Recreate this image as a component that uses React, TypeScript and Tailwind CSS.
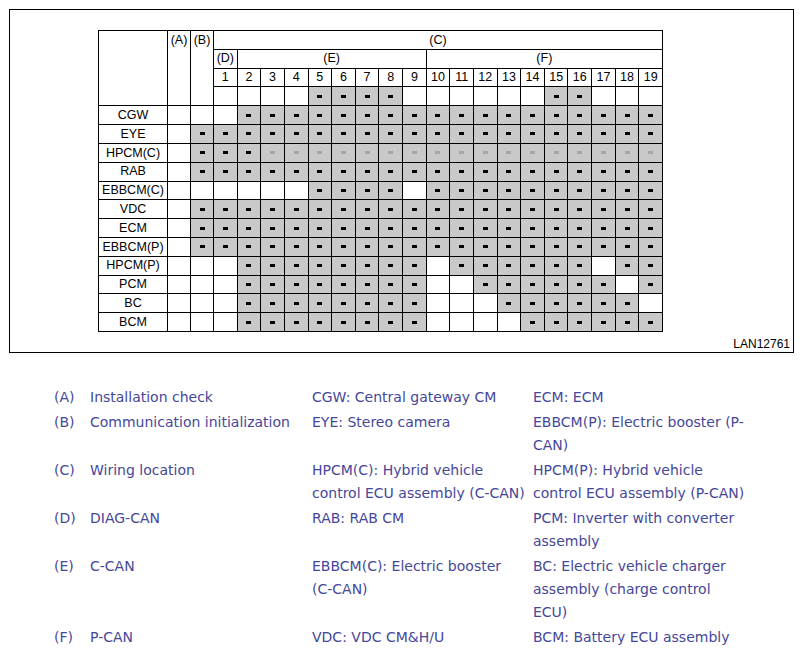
import React from 'react';

// B column + columns 1..19 : '.' empty, 'x' shaded with dash, 'l' shaded with faint dash
const rows: { name: string; cells: string }[] = [
  { name: 'CGW', cells: '..xxxxxxxxxxxxxxxxxx' },
  { name: 'EYE', cells: 'xxxxxxxxxxxxxxxxxxxx' },
  { name: 'HPCM(C)', cells: 'xxxlllllllllllllllll' },
  { name: 'RAB', cells: 'xxxxxxxxxxxxxxxxxxxx' },
  { name: 'EBBCM(C)', cells: '.....xxxx.xxxxxxxxxx' },
  { name: 'VDC', cells: 'xxxxxxxxxxxxxxxxxxxx' },
  { name: 'ECM', cells: 'xxxxxxxxxxxxxxxxxxxx' },
  { name: 'EBBCM(P)', cells: 'xxxxxxxxxxxxxxxxxxxx' },
  { name: 'HPCM(P)', cells: '..xxxxxxxx.xxxxxx.xx' },
  { name: 'PCM', cells: '..xxxxxxxx..xxxxxx.x' },
  { name: 'BC', cells: '..xxxxxxxx...xxxxxx.' },
  { name: 'BCM', cells: '..xxxxxxxx....xxxxxx' },
];

const topRow = '....xxxx......xx...';

const legend: [string, string, string, string][] = [
  ['(A)', 'Installation check', 'CGW: Central gateway CM', 'ECM: ECM'],
  ['(B)', 'Communication initialization', 'EYE: Stereo camera', 'EBBCM(P): Electric booster (P-CAN)'],
  ['(C)', 'Wiring location', 'HPCM(C): Hybrid vehicle control ECU assembly (C-CAN)', 'HPCM(P): Hybrid vehicle control ECU assembly (P-CAN)'],
  ['(D)', 'DIAG-CAN', 'RAB: RAB CM', 'PCM: Inverter with converter assembly'],
  ['(E)', 'C-CAN', 'EBBCM(C): Electric booster (C-CAN)', 'BC: Electric vehicle charger assembly (charge control ECU)'],
  ['(F)', 'P-CAN', 'VDC: VDC CM&H/U', 'BCM: Battery ECU assembly'],
];

const Cell = ({ kind }: { kind: string }) => {
  if (kind === '.') return <div className="bg-white" />;
  return (
    <div className="bg-[#c9c9c9] flex items-center justify-center">
      <span className={`block w-[5px] h-[3px] ${kind === 'l' ? 'bg-[#a6a6a6]' : 'bg-black'}`} />
    </div>
  );
};

export default function App() {
  return (
    <div className="p-[9px] bg-white font-['Liberation_Sans',Arial,sans-serif] text-black">
      <div className="w-[785px] h-[344px] border border-black pl-[88px] pt-[20px]">
        <div className="w-[565px] h-[302px] p-px gap-px bg-black grid grid-cols-[68px_22px_22px_repeat(19,minmax(0,1fr))] grid-rows-[repeat(16,minmax(0,1fr))] text-[12.5px] leading-none">
          <div className="bg-white row-span-4" />
          <div className="bg-white row-span-4 flex justify-center pt-[3px]">(A)</div>
          <div className="bg-white row-span-4 flex justify-center pt-[3px]">(B)</div>
          <div className="bg-white col-span-19 flex items-center justify-center">(C)</div>
          <div className="bg-white flex items-center justify-center">(D)</div>
          <div className="bg-white col-span-8 flex items-center justify-center">(E)</div>
          <div className="bg-white col-span-10 flex items-center justify-center">(F)</div>
          {Array.from({ length: 19 }, (_, i) => (
            <div key={i} className="bg-white flex items-center justify-center">
              {i + 1}
            </div>
          ))}
          {topRow.split('').map((k, i) => (
            <Cell key={i} kind={k} />
          ))}
          {rows.map((r) => (
            <React.Fragment key={r.name}>
              <div className="bg-white flex items-center justify-center">{r.name}</div>
              <div className="bg-white" />
              {r.cells.split('').map((k, i) => (
                <Cell key={i} kind={k} />
              ))}
            </React.Fragment>
          ))}
        </div>
        <div className="flex justify-end pr-[3px] pt-[6px] text-[12px] leading-none">LAN12761</div>
      </div>

      <div className="mt-[33px] ml-[45px] grid grid-cols-[36px_222px_221px_216px] gap-y-[2px] text-[14px] leading-[23px] text-[#45479a] font-['DejaVu_Sans',Verdana,sans-serif]">
        {legend.map((l) => (
          <React.Fragment key={l[0]}>
            <div>{l[0]}</div>
            <div>{l[1]}</div>
            <div className="pr-2">{l[2]}</div>
            <div>{l[3]}</div>
          </React.Fragment>
        ))}
      </div>
    </div>
  );
}
